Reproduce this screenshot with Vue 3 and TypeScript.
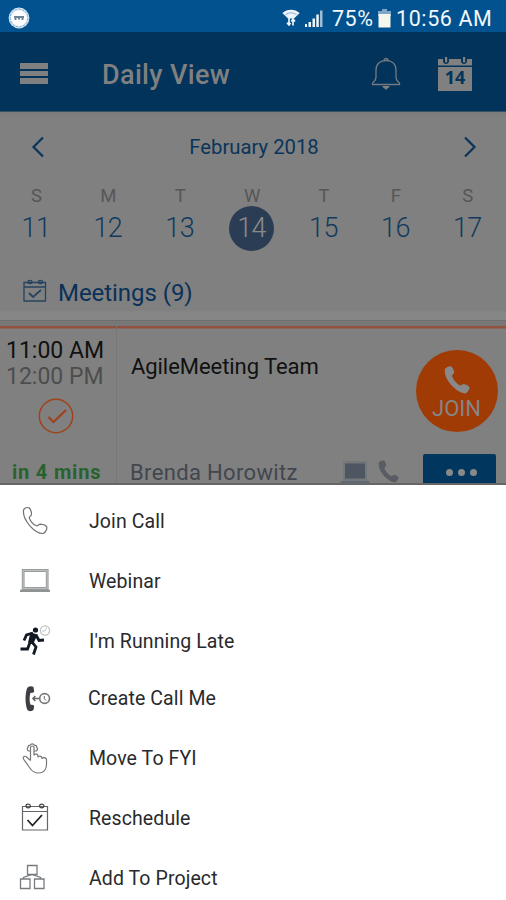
<script setup lang="ts">
interface Day {
  letter: string
  date: number
  selected?: boolean
}

interface Action {
  id: string
  label: string
}

const days: Day[] = [
  { letter: 'S', date: 11 },
  { letter: 'M', date: 12 },
  { letter: 'T', date: 13 },
  { letter: 'W', date: 14, selected: true },
  { letter: 'T', date: 15 },
  { letter: 'F', date: 16 },
  { letter: 'S', date: 17 },
]

const actions: Action[] = [
  { id: 'call', label: 'Join Call' },
  { id: 'webinar', label: 'Webinar' },
  { id: 'late', label: "I'm Running Late" },
  { id: 'callme', label: 'Create Call Me' },
  { id: 'fyi', label: 'Move To FYI' },
  { id: 'reschedule', label: 'Reschedule' },
  { id: 'project', label: 'Add To Project' },
]
</script>

<template>
  <div class="screen">
    <div class="status">
      <svg class="badge" width="22" height="22" viewBox="0 0 22 22">
        <circle cx="11" cy="11" r="10.4" fill="#d8e8f4" />
        <circle cx="11" cy="11" r="8.9" fill="none" stroke="#82aaca" stroke-width="1" stroke-dasharray="2.5 1.2" />
        <circle cx="11" cy="11" r="7.8" fill="#fff" />
        <path d="M6 9h10v2H6zM6.5 11h2v2h-2zM10 11h2v1.500h-2zM13.500 11h2v2h-2z" fill="#6c8495" />
      </svg>
      <div class="status-right">
        <svg class="wifi" width="18" height="17" viewBox="0 0 18 17">
          <path d="M.3 4C5-.5 13-.5 17.700 4L12 9.600H6z" fill="#eef5fa" />
          <path d="M3.500 5.600c3.500-2.300 7.500-2.300 11 0" fill="none" stroke="#6d9cc1" stroke-width=".8" />
          <path d="M7 9v7M5 13.700 7 16l1.600-2M11 16.500V10M9.400 12.500 11 10l2 2.500" fill="none" stroke="#eef5fa" stroke-width="1.700" />
        </svg>
        <svg class="signal" width="18" height="17" viewBox="0 0 18 17">
          <path d="M0 14h2v3H0zM3.500 12h2.500v5H3.500zM7.500 8.500H10V17H7.500zM11.300 4.500h2.500V17h-2.500z" fill="#edf4fa" />
          <path d="M15 .5h2.500V17H15z" fill="#9dbdd7" />
        </svg>
        <span class="percent">75%</span>
        <svg class="battery" width="13" height="19" viewBox="0 0 13 19">
          <path d="M4 0h5v2h4v5H0V2h4z" fill="#7ba7ca" />
          <path d="M.5 5h12v13.500H.5z" fill="#f5f6ed" />
        </svg>
        <span class="clock">10:56 AM</span>
      </div>
    </div>

    <div class="header">
      <div class="burger"><i></i><i></i><i></i></div>
      <h1>Daily View</h1>
      <svg class="bell" width="30" height="34" viewBox="0 0 30 34">
        <path d="M13 3.500a2 2 0 1 1 4 0M1.500 27.500v-1.300C4 24 5 23 5 20v-7C5 7 9 3.500 15 3.500S25 7 25 13v7c0 3 1 4 3.500 6.200v1.300z" fill="none" stroke="#747a7f" stroke-width="1.300" />
        <path d="M11.500 29h7c0 1.500-1.200 2-2 2.300-.5 1.800-2.500 1.800-3 0-1-.3-2-.8-2-2.300z" fill="#808080" />
      </svg>
      <div class="today">
        <svg width="36" height="36" viewBox="0 0 36 36">
          <path d="M1 3h34v6.500H1zM1 11h34v24H1z" fill="#808080" />
          <path d="M6 1v4c0 4 6 4 6 0V1M24 1v4c0 4 6 4 6 0V1" fill="#01335b" />
          <path d="M8 1v4.500c0 1.500 2.200 1.500 2.200 0V1zM26 1v4.500c0 1.500 2.200 1.500 2.200 0V1z" fill="#808080" />
        </svg>
        <span>14</span>
      </div>
    </div>

    <div class="calendar">
      <div class="month">
        <svg width="14" height="22" viewBox="0 0 14 22"><path d="M12 1.500 2.500 11 12 20.500" fill="none" stroke="#0a355b" stroke-width="2.200" /></svg>
        <span>February 2018</span>
        <svg width="14" height="22" viewBox="0 0 14 22"><path d="M2 1.500 11.500 11 2 20.500" fill="none" stroke="#0a355b" stroke-width="2.200" /></svg>
      </div>
      <div class="week">
        <div v-for="day in days" :key="day.date" class="day">
          <span class="letter">{{ day.letter }}</span>
          <span class="date" :class="{ selected: day.selected }">{{ day.date }}</span>
        </div>
      </div>
      <div class="meetings">
        <svg width="24" height="24" viewBox="0 0 24 24" fill="none" stroke="#26435f" stroke-width="1.300">
          <path d="M1 3.500h21.500v18.500H1zM1 8h21.500" />
          <path d="M5 3a2 1.600 0 1 0 4 0a2 1.600 0 1 0-4 0M15.500 3a2 1.600 0 1 0 4 0a2 1.600 0 1 0-4 0" />
          <path d="m6 14 4 4 8-7" stroke-width="1.800" />
        </svg>
        <span>Meetings (9)</span>
      </div>
    </div>

    <div class="card">
      <div class="times">
        <span class="start">11:00 AM</span>
        <span class="end">12:00 PM</span>
        <svg class="accepted" width="36" height="36" viewBox="0 0 36 36" fill="none" stroke="#9d431c">
          <circle cx="18" cy="18" r="16.700" stroke-width="1.500" />
          <path d="m10.500 19 5 5L28 12" stroke-width="2.300" />
        </svg>
        <span class="soon">in 4 mins</span>
      </div>
      <div class="details">
        <span class="subject">AgileMeeting Team</span>
        <span class="host">Brenda Horowitz</span>
      </div>
      <div class="side">
        <div class="join">
          <svg width="26" height="28" viewBox="0 0 26 28">
            <path d="M1 3C2.500 1 5.500-.3 7.200.5c1.800.8 3.300 5 2.800 6.500-.4 1.400-2.300 1.700-2 3 1 3.400 5 8.300 8.300 9.500 1.400.4 1.700-1.500 3.200-1.500 2.500.2 5.500 2 6 3.200.3 2-2 5.500-4 6.300C13 27.500-1 13.500 1 3z" fill="#898989" />
          </svg>
          <span>JOIN</span>
        </div>
        <div class="tools">
          <svg class="laptop" width="30" height="25" viewBox="0 0 30 25">
            <path d="M3 1h24v20H3z" fill="#74777a" /><path d="M5 3.500h20v15H5z" fill="#4d5661" /><path d="M1 21h28l1 3H0z" fill="#62686f" />
          </svg>
          <svg class="phone" width="21" height="23" viewBox="0 0 26 28">
            <path d="M1 3C2.500 1 5.500-.3 7.200.5c1.800.8 3.300 5 2.800 6.500-.4 1.400-2.300 1.700-2 3 1 3.400 5 8.300 8.300 9.500 1.400.4 1.700-1.500 3.200-1.500 2.500.2 5.500 2 6 3.200.3 2-2 5.500-4 6.300C13 27.500-1 13.500 1 3z" fill="#585d64" />
          </svg>
          <div class="more"><i></i><i></i><i></i></div>
        </div>
      </div>
    </div>

    <div class="sheet">
      <div v-for="action in actions" :key="action.id" class="action" :class="action.id">
        <div class="icon">
          <svg v-if="action.id === 'call'" width="32" height="32" viewBox="0 0 32 32" fill="none" stroke="#707070" stroke-width="1.200">
            <path d="M4.500 5.500C4.700 3.500 7.500 1.800 10 2.800c1.700 1.200 3 5.500 2.300 7.200-.6 1.500-2.400 1.500-2 2.900 1 3.300 4 6.600 7.200 7.800 1.600.5 2-1.400 3.700-1.500 2.500.2 5.800 1.300 6.600 3 .4 2-1.500 5.800-3.800 6.300C15.500 28.500 3.500 15 4.500 5.500z" />
          </svg>
          <svg v-else-if="action.id === 'webinar'" width="32" height="32" viewBox="0 0 32 32">
            <path d="M4.200 5.500h24v18h-24z" fill="none" stroke="#999d9d" stroke-width="2.800" />
            <path d="M4.200 5.500h24v18h-24z" fill="none" stroke="#c3c6c6" stroke-width=".8" />
            <path d="M1 24.700h30v2.300H1z" fill="#8e9292" />
          </svg>
          <svg v-else-if="action.id === 'late'" width="32" height="32" viewBox="0 0 32 32">
            <circle cx="16.500" cy="5" r="2.600" fill="#111922" />
            <path d="M5 15.500 7.500 10l6.500-2M17 10l3 5.500 5-.5M11 17.500 8.500 24H1.500M13 17l4 5-2.500 7.500" fill="none" stroke="#111922" stroke-width="2.800" />
            <path d="m11.500 7.500 7 2-4.500 10-5-2z" fill="#111922" />
            <circle cx="26" cy="5.500" r="4.600" fill="none" stroke="#bfc2c4" stroke-width="1.300" />
            <path d="M27.500 3 26 6h-3" fill="none" stroke="#bfc2c4" />
          </svg>
          <svg v-else-if="action.id === 'callme'" width="32" height="32" viewBox="0 0 32 32">
            <path d="M8 5.500C9 3 12.500 2.500 14.500 4l.7 4.500c-1 1.500-2 1.600-3.700 1.300-1.200 3.500-1.200 8.500 0 12 1.700-.3 2.700 0 3.700 1.300l-.7 4c-2 1.800-5.500 1.500-6.500-1.100C6 20 6 11.500 8 5.500z" fill="#3d3f43" />
            <path d="M13.500 15.500H20M16.300 13 14 15.500l2.300 2.500" fill="none" stroke="#666" stroke-width="1.600" />
            <circle cx="25.600" cy="15.500" r="4.900" fill="none" stroke="#777" stroke-width="1.600" />
            <path d="M25.300 13v2.500l1.700 2" fill="none" stroke="#666" />
          </svg>
          <svg v-else-if="action.id === 'fyi'" width="32" height="32" viewBox="0 0 32 32" fill="none" stroke="#777" stroke-width="1.200">
            <path d="M11.500 18.500V5.500c0-2 3.500-2 3.500 0v8m0-.5c1-1.500 4-1 4 1v1.500c0-2 4-2 4 .5v1c0-2 4.500-2 4.500 1v4.500c0 5-3 8.500-8 8.500-4 0-6.500-1.500-9-5.500L4.500 17c-1-2.500 1.500-3.500 3-2l4 3.500" />
            <path d="M11.500 9H9.500C8 8 7.800 6.200 9 5.500c0-1.500 1-2.300 2-2.300 1-1.700 3.500-1.700 4.500 0 1.500 0 2.300 1 2.300 2.300 1.200.7.700 2.700-.5 3.500H15" />
          </svg>
          <svg v-else-if="action.id === 'reschedule'" width="32" height="32" viewBox="0 0 32 32" fill="none" stroke="#62666b" stroke-width="1.200">
            <path d="M3.500 4.500h25V28h-25zM3.500 9.500h25" />
            <path d="M7 4a2.200 1.800 0 1 0 4.400 0a2.200 1.800 0 1 0-4.400 0M20.500 4a2.200 1.800 0 1 0 4.400 0a2.200 1.800 0 1 0-4.400 0" stroke="#444" />
            <path d="m8.500 18 5 5.500L23 13" stroke="#222" stroke-width="1.800" />
          </svg>
          <svg v-else width="32" height="32" viewBox="0 0 32 32" fill="none" stroke="#777b7f" stroke-width="1.300">
            <path d="M8.500 3.500h9.500v9H8.500zM1.500 17h9.500v9.500H1.500zM15.500 17H25v9.500h-9.500z" />
            <path d="M4.500 17v-1.500l8.500-3 8.500 3V17" />
          </svg>
        </div>
        <span class="label">{{ action.label }}</span>
      </div>
    </div>
  </div>
</template>

<style>
body {
  margin: 0;
}
</style>

<style scoped>
.screen {
  width: 506px;
  height: 900px;
  overflow: hidden;
  display: flex;
  flex-direction: column;
  background: #fff;
  font-family: Roboto, sans-serif;
  white-space: nowrap;
}
svg {
  display: block;
  flex: none;
}
.status {
  height: 32px;
  flex: none;
  box-sizing: border-box;
  padding: 0 14px 0 8px;
  display: flex;
  justify-content: space-between;
  background: #02528f;
  color: #f2f7fb;
}
.badge { margin-top: 7px; }
.status-right {
  display: flex;
  font-size: 21.500px;
  line-height: 38px;
}
.wifi { margin-top: 9px; }
.signal { margin: 10px 9px 0 5px; }
.percent { width: 46px; letter-spacing: 0.5px; }
.battery { margin: 9px 5px 0 0; }
.clock { width: 96px; letter-spacing: 0.6px; }
.header {
  height: 80px;
  flex: none;
  box-sizing: border-box;
  padding-left: 20px;
  border-bottom: 1px solid #345063;
  display: flex;
  background: #01335b;
  color: #808080;
}
.burger {
  width: 28px;
  padding-top: 31px;
  display: flex;
  flex-direction: column;
  gap: 2px;
}
.burger i {
  height: 5.5px;
  background: #808080;
}
h1 {
  width: 269px;
  margin: 0 0 0 54px;
  font-size: 27px;
  font-weight: 500;
  line-height: 86px;
  letter-spacing: 0.35px;
}
.bell { margin-top: 25px; }
.today {
  margin: 24px 0 0 36px;
  display: grid;
  align-content: start;
}
.today > * { grid-area: 1 / 1; }
.today span {
  font-family: "Open Sans", sans-serif;
  font-size: 18px;
  font-weight: 700;
  line-height: 43px;
  height: 36px;
  text-align: center;
  color: #01335b;
}
.calendar {
  height: 210px;
  flex: none;
  box-sizing: border-box;
  background: linear-gradient(#7b7b7b, #808080 6px, #808080 198px, #868686 200px);
  border-bottom: 2px solid #6e6e6e;
}
.month {
  padding: 23px 29px 0 31px;
  display: flex;
  justify-content: space-between;
  align-items: center;
  font-size: 20.300px;
  line-height: 24px;
  color: #0a355b;
}
.week {
  padding: 25px 1px 0 0;
  display: grid;
  grid-template-columns: repeat(7, 71.9px);
}
.day {
  display: flex;
  flex-direction: column;
  align-items: center;
}
.letter {
  font-size: 18.500px;
  height: 22px;
  line-height: 24px;
  padding-left: 1px;
  color: #565656;
}
.date {
  width: 45px;
  height: 45px;
  border-radius: 50%;
  text-align: center;
  font-size: 27px;
  font-weight: 300;
  line-height: 45px;
  letter-spacing: -0.6px;
  color: #123a5d;
}
.date.selected {
  background: #2b3d54;
  color: #8b8b8b;
}
.meetings {
  padding: 28px 0 0 23px;
  display: flex;
  gap: 11px;
  font-size: 24px;
  line-height: 28px;
  letter-spacing: -0.05px;
  color: #0a3158;
}
.card {
  height: 164px;
  flex: none;
  box-sizing: border-box;
  margin-top: -1px;
  border-top: 5px solid #777;
  border-bottom: 2px solid #666;
  display: flex;
  background: linear-gradient(#93503c 2px, #808080 3px);
}
.times {
  width: 117px;
  flex: none;
  box-sizing: border-box;
  border-right: 1px solid #777;
  display: flex;
  flex-direction: column;
  padding: 12px 0 0 6px;
  font-size: 23px;
  line-height: 26px;
  color: #111;
}
.end { color: #4d4d4d; }
.accepted { margin: 8px 0 0 32px; }
.soon {
  margin: 25px 0 0 6px;
  font-size: 20px;
  font-weight: 700;
  letter-spacing: 0.8px;
  color: #27632f;
}
.details {
  width: 283px;
  flex: none;
  box-sizing: border-box;
  padding-left: 13px;
  display: flex;
  flex-direction: column;
  font-size: 22px;
  line-height: 26px;
}
.subject { margin: 28px 0 0 1px; color: #111; letter-spacing: -0.06px; }
.host { margin-top: 80px; color: #42464e; letter-spacing: 0.35px; }
.side { width: 106px; flex: none; }
.join {
  width: 82px;
  height: 82px;
  margin: 24px 0 0 15.5px;
  border-radius: 50%;
  display: flex;
  flex-direction: column;
  align-items: center;
  background: #a13b06;
  color: #858585;
}
.join svg { margin-top: 16px; }
.join span {
  font-size: 22px;
  line-height: 29px;
}
.tools {
  display: flex;
  margin: 22px 0 0 -60px;
}
.laptop { margin-top: 6px; }
.phone { margin: 6px 0 0 8px; }
.more {
  width: 73px;
  height: 29px;
  flex: none;
  margin-left: 24px;
  border-radius: 2px 2px 0 0;
  display: flex;
  gap: 5px;
  justify-content: center;
  box-sizing: border-box;
  padding: 15px 0 0 3px;
  background: #01365f;
}
.more i {
  width: 7px;
  height: 7px;
  border-radius: 50%;
  background: #898989;
}
.sheet {
  flex: none;
  padding-top: 6px;
  background: #fff;
}
.action {
  height: 60px;
  padding-left: 19px;
  display: flex;
  align-items: center;
  font-size: 19.500px;
  line-height: 24px;
  letter-spacing: 0.1px;
  color: #292a2d;
}
.label { padding-top: 2px; }
.action.callme {
  height: 55px;
  padding-bottom: 2px;
}
.callme .label { padding-top: 0; }
.icon { width: 70px; }
.callme .icon { width: 69px; }
</style>
